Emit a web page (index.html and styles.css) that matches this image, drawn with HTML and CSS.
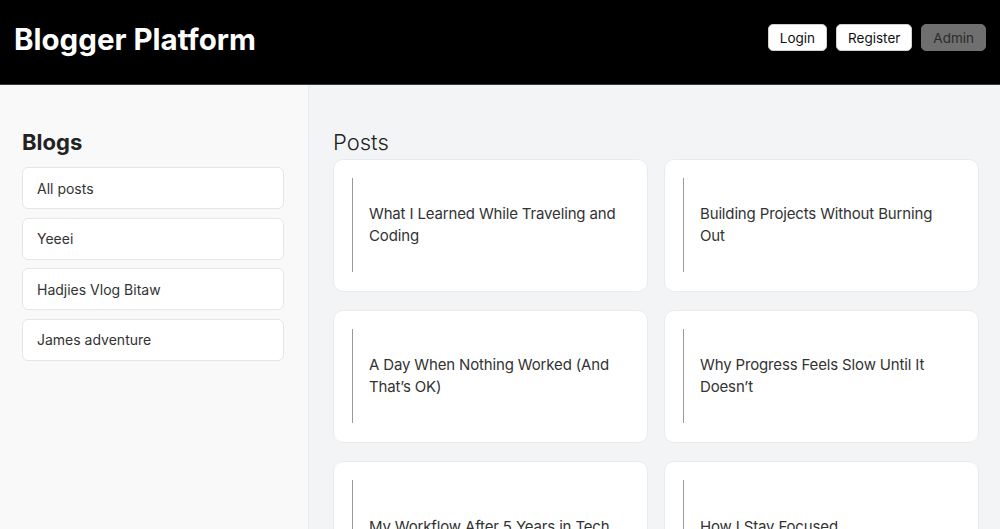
FILE: index.html
```html
<!DOCTYPE html>
<html lang="en">
<head>
<meta charset="utf-8">
<title>Blogger Platform</title>
<link rel="stylesheet" href="styles.css">
</head>
<body>
<header class="topbar">
  <h1 class="brand">Blogger Platform</h1>
  <nav class="actions">
    <button class="btn">Login</button>
    <button class="btn">Register</button>
    <button class="btn btn-admin">Admin</button>
  </nav>
</header>
<div class="layout">
  <aside class="sidebar">
    <h2 class="side-title">Blogs</h2>
    <ul class="blog-list">
      <li class="blog-item">All posts</li>
      <li class="blog-item">Yeeei</li>
      <li class="blog-item">Hadjies Vlog Bitaw</li>
      <li class="blog-item">James adventure</li>
    </ul>
  </aside>
  <main class="content">
    <h2 class="posts-title">Posts</h2>
    <div class="grid">
      <article class="card"><div class="quote"><p>What I Learned While Traveling and Coding</p></div></article>
      <article class="card"><div class="quote"><p>Building Projects Without Burning Out</p></div></article>
      <article class="card"><div class="quote"><p>A Day When Nothing Worked (And That’s OK)</p></div></article>
      <article class="card"><div class="quote"><p>Why Progress Feels Slow Until It Doesn’t</p></div></article>
      <article class="card"><div class="quote"><p>My Workflow After 5 Years in Tech</p></div></article>
      <article class="card"><div class="quote"><p>How I Stay Focused</p></div></article>
    </div>
  </main>
</div>
</body>
</html>
```
FILE: styles.css
```css
* { box-sizing: border-box; }
html, body { height: 100%; }
body {
  margin: 0;
  font-family: Inter, "Noto Sans", "Liberation Sans", sans-serif;
  color: #2b2b2b;
  background: #f3f4f6;
  overflow: hidden;
}
.topbar {
  height: 85px;
  background: #000;
  border-bottom: 1px solid #3a3a3a;
  display: flex;
  align-items: center;
  justify-content: space-between;
  padding: 0 14px 9px 14px;
}
.brand {
  margin: 0;
  color: #fff;
  font-size: 29.5px;
  font-weight: 700;
  letter-spacing: 0;
  position: relative;
  top: 1px;
}
.actions { display: flex; gap: 9px; }
.btn {
  font-family: inherit;
  font-size: 13.5px;
  height: 27px;
  padding: 0 11px;
  background: #fff;
  color: #111;
  border: 1px solid #d0d0d0;
  border-radius: 5px;
}
.btn-admin { background: #6f6f6f; border-color: #6f6f6f; color: #2a2a2a; }
.layout { display: flex; height: calc(100% - 85px); }
.sidebar {
  width: 309px;
  flex: none;
  background: #f9f9f9;
  border-right: 1px solid #ececec;
  padding: 43px 24px 0 22px;
}
.side-title {
  margin: 0 0 11px;
  font-size: 22px;
  line-height: 28px;
  font-weight: 700;
  color: #222;
}
.blog-list { list-style: none; margin: 0; padding: 0; display: flex; flex-direction: column; gap: 8.5px; }
.blog-item {
  height: 42px;
  display: flex;
  align-items: center;
  padding: 0 14px;
  background: #fff;
  border: 1px solid #e6e6e6;
  border-radius: 6px;
  font-size: 14px;
  color: #333;
}
.content { flex: 1; padding: 43px 21px 0 24px; }
.posts-title {
  margin: 0 0 3px;
  font-size: 22px;
  line-height: 28px;
  font-weight: 300;
  color: #222;
}
.grid { display: grid; grid-template-columns: 1fr 1fr; gap: 18px 16px; }
.card {
  height: 133px;
  background: #fff;
  border: 1px solid #ebebeb;
  border-radius: 10px;
  padding: 18px 18px;
}
.quote {
  height: 94px;
  border-left: 1px solid #9a9a9a;
  padding: 0 6px 0 16px;
  display: flex;
  align-items: center;
}
.quote p { margin: 0; font-size: 15px; line-height: 22px; letter-spacing: -0.15px; color: #333; }
```
